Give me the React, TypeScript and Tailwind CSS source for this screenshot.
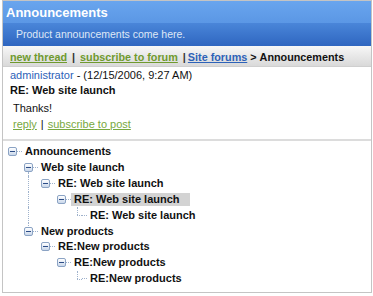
import type { ReactNode } from "react";

type TreeNode = {
  label: string;
  level: number;
  leaf?: boolean;
  selected?: boolean;
  // sibling line columns: full row, lower half, upper half
  rails?: number[];
  railsDown?: number[];
  railsUp?: number[];
};

const TREE: TreeNode[] = [
  { label: "Announcements", level: 0 },
  { label: "Web site launch", level: 1, railsDown: [1] },
  { label: "RE: Web site launch", level: 2, rails: [1] },
  { label: "RE: Web site launch", level: 3, rails: [1], selected: true },
  { label: "RE: Web site launch", level: 4, rails: [1], leaf: true },
  { label: "New products", level: 1, railsUp: [1] },
  { label: "RE:New products", level: 2 },
  { label: "RE:New products", level: 3 },
  { label: "RE:New products", level: 4, leaf: true },
];

const BASE = 5;
const COL = 16.3;

const colX = (c: number) => BASE + Math.round(c * COL) + 4;

function MinusIcon() {
  return (
    <span className="relative inline-block w-[9px] h-[9px] shrink-0 rounded-[2px] border border-[#8ba3c4] bg-gradient-to-b from-white to-[#c9d7ea]">
      <span className="absolute left-[1px] right-[1px] top-[3px] h-[1px] bg-[#2c4c86]" />
    </span>
  );
}

function TreeRow({ node }: { node: TreeNode }) {
  const iconLeft = BASE + Math.round(node.level * COL);
  return (
    <div className="relative flex items-center h-[15.85px]">
      {(node.rails ?? []).map((c) => (
        <span
          key={`f${c}`}
          className="absolute top-0 bottom-0 border-l border-dotted border-[#9fb2cc]"
          style={{ left: colX(c) }}
        />
      ))}
      {(node.railsDown ?? []).map((c) => (
        <span
          key={`d${c}`}
          className="absolute top-[12px] bottom-0 border-l border-dotted border-[#9fb2cc]"
          style={{ left: colX(c) }}
        />
      ))}
      {(node.railsUp ?? []).map((c) => (
        <span
          key={`u${c}`}
          className="absolute top-0 h-[3px] border-l border-dotted border-[#9fb2cc]"
          style={{ left: colX(c) }}
        />
      ))}
      <span className="shrink-0" style={{ width: iconLeft }} />
      {node.leaf ? (
        <span className="relative w-[9px] h-full shrink-0">
          <span className="absolute left-[4px] top-0 h-[8px] border-l border-dotted border-[#9fb2cc]" />
          <span className="absolute left-[4px] right-0 top-[8px] border-t border-dotted border-[#9fb2cc]" />
        </span>
      ) : (
        <MinusIcon />
      )}
      <span className="w-[5px] shrink-0 border-t border-dotted border-[#9fb2cc]" />
      <span
        className={`pl-[3px] font-bold text-[11px] leading-[13px] text-[#111] ${
          node.selected ? "bg-[#d3d3d3] pr-[10px]" : "pr-[3px]"
        }`}
      >
        {node.label}
      </span>
    </div>
  );
}

function Sep({ children }: { children?: ReactNode }) {
  return <span className="mx-[5px] text-[#333]">{children ?? "|"}</span>;
}

export default function App() {
  return (
    <div className="w-[373px] h-[296px] bg-white font-['Liberation_Sans',Arial,sans-serif] overflow-hidden">
      <div className="ml-[2px] w-[370px] h-[293px] border border-[#c4c4c4] flex flex-col">
        {/* header */}
        <div className="h-[22px] bg-gradient-to-b from-[#69a5ee] to-[#5b97e5] pl-[3px] pt-[4px]">
          <h1 className="text-[13px] leading-[15px] font-bold text-white">Announcements</h1>
        </div>
        <div className="h-[23px] bg-gradient-to-b from-[#4a86d9] to-[#2f66c0] pl-[13px] pt-[5px]">
          <p className="text-[10.5px] leading-[13px] text-[#dfe8f6]">Product announcements come here.</p>
        </div>

        {/* toolbar */}
        <div className="h-[21px] flex items-center pt-[3px] pl-[7px] bg-gradient-to-b from-[#f7f7f7] to-[#d9d9d9] border-b border-[#cfcfcf] text-[10.8px] font-bold">
          <a className="text-[#6f9a2e] underline">new thread</a>
          <Sep />
          <a className="text-[#6f9a2e] underline">subscribe to forum</a>
          <span className="ml-[5px] mr-[2px] text-[#333]">|</span>
          <a className="text-[#2d62b8] underline">Site forums</a>
          <span className="mx-[3px] text-[#111]">&gt;</span>
          <span className="text-[#111]">Announcements</span>
        </div>

        {/* post */}
        <div className="pl-[7px] text-[11px] leading-[16px] text-[#111]">
          <div>
            <span className="text-[#2d62b8]">administrator</span> - (12/15/2006, 9:27 AM)
          </div>
          <div className="font-bold -mt-[1px]">RE: Web site launch</div>
          <div className="pl-[3px] mt-[2px]">Thanks!</div>
          <div className="pl-[3px]">
            <a className="text-[#78a83e] underline">reply</a>
            <span className="mx-[4px]">|</span>
            <a className="text-[#78a83e] underline">subscribe to post</a>
          </div>
        </div>

        <div className="mt-[7px] h-[2px] bg-[#dcdcdc]" />

        {/* tree */}
        <div className="pt-[3px]">
          {TREE.map((node, i) => (
            <TreeRow key={i} node={node} />
          ))}
        </div>
      </div>
    </div>
  );
}
